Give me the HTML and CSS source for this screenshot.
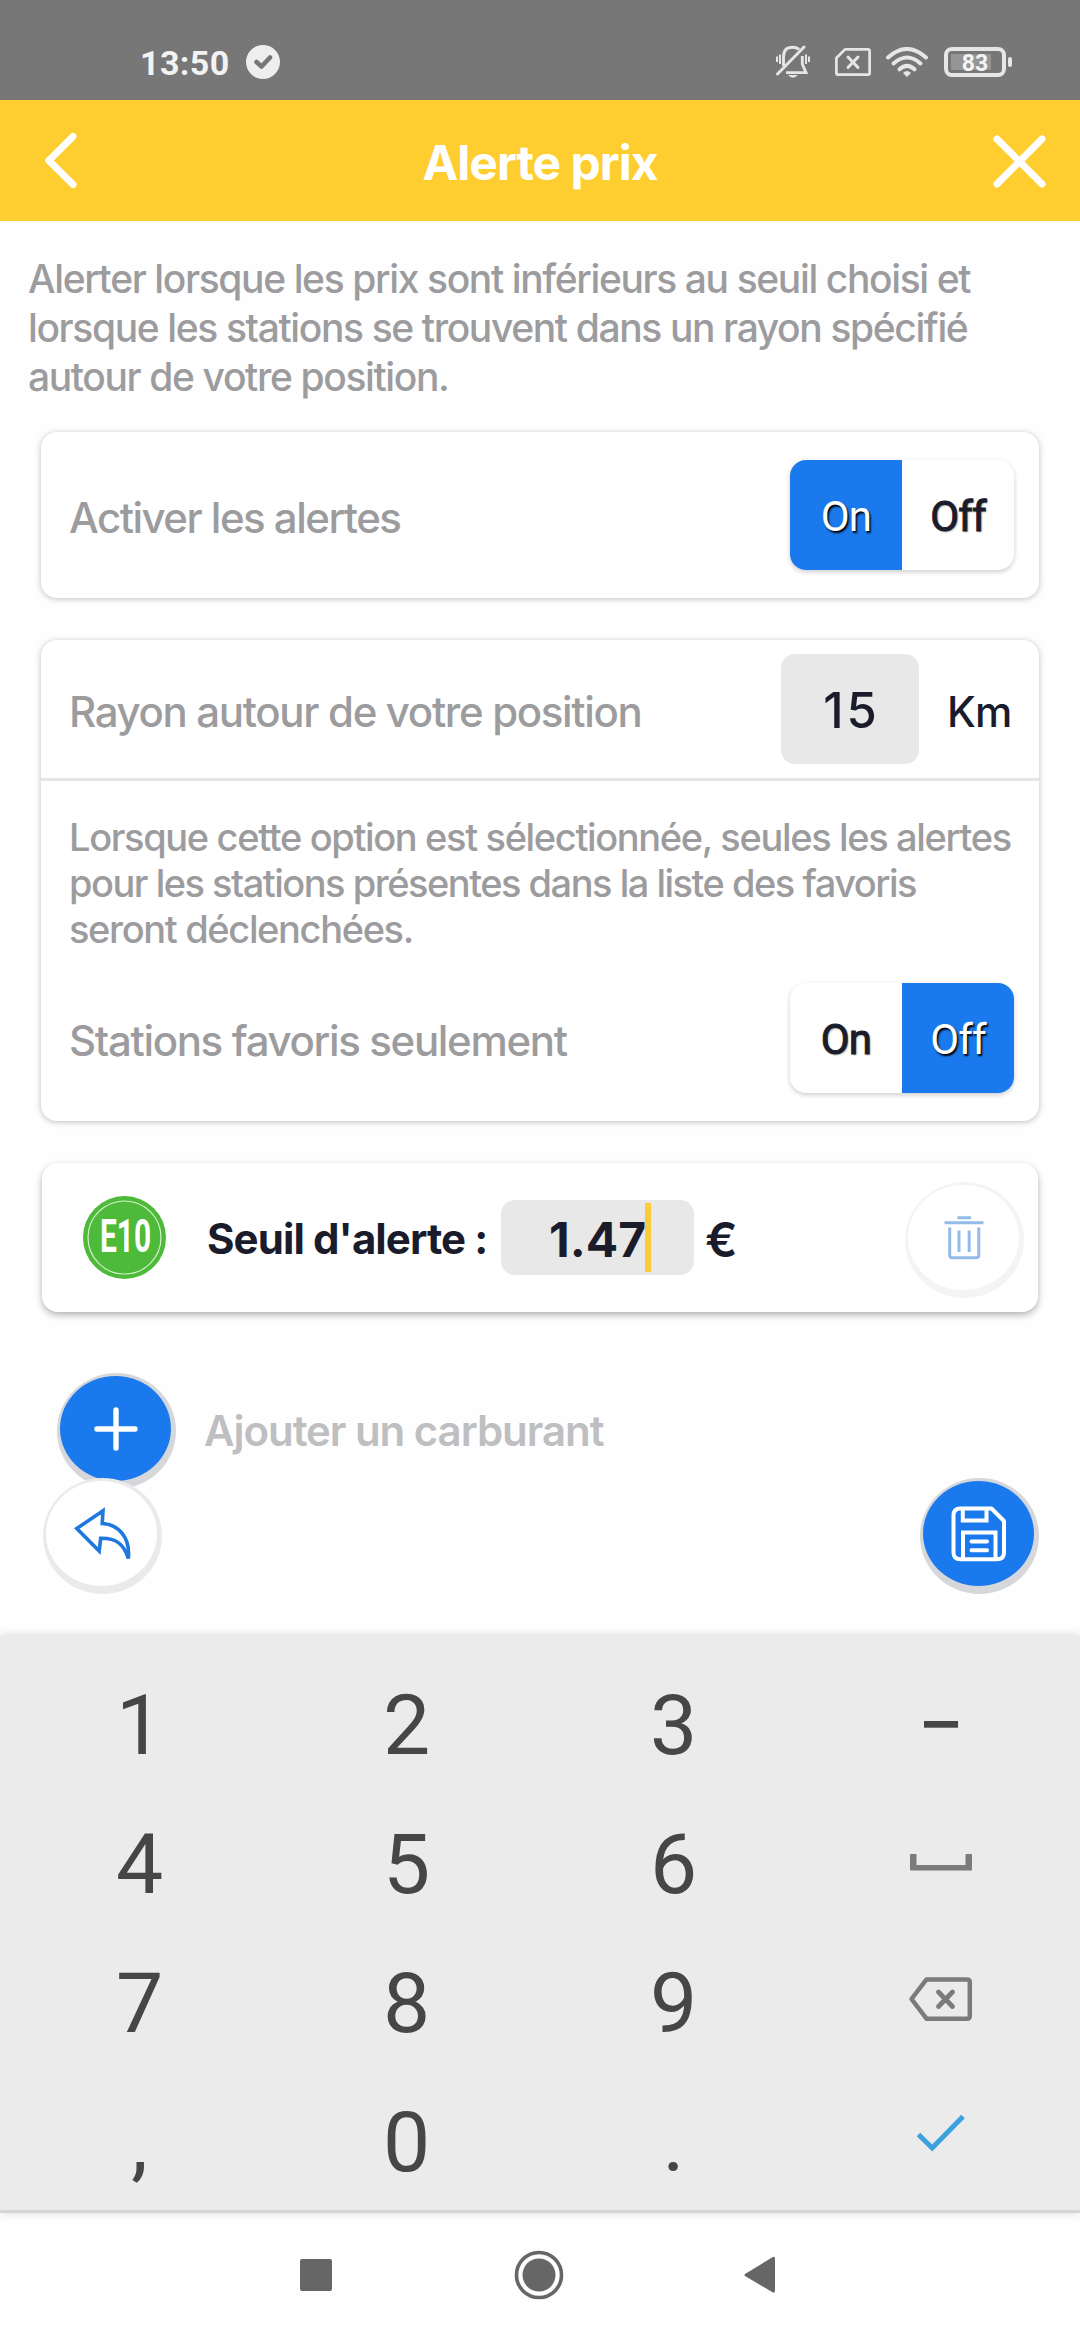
FILE: index.html
```
<!DOCTYPE html>
<html lang="fr">
  <head>
    <meta charset="UTF-8" />
    <meta name="viewport" content="width=device-width, initial-scale=1.0" />
    <title>Alerte prix</title>
    <link rel="stylesheet" href="styles.css">
  </head>
  <body>
    <div class="status-bar">
      <span class="clock">13:50</span>
      <svg class="icon-done" width="34" height="34" viewBox="0 0 34 34">
        <circle cx="17" cy="17" r="17" fill="#eee" />
        <path d="M10.5 17 L15.5 21.5 L24 12.5" fill="none" stroke="#777" stroke-width="4.6" stroke-linecap="round" stroke-linejoin="round" />
      </svg>
      <div class="status-icons">
        <svg class="icon-bell" width="34" height="34" viewBox="776 45 34 34" fill="none" stroke="#e6e6e6" stroke-width="2.9">
          <path d="M783.5 66 V57 C783.5 49 788 47.3 792.5 47.3 C795 47.3 797.5 48 799 49.5" />
          <path d="M802.3 56 V64 L806 72.6 H786" />
          <path d="M777.5 74 L804 47" stroke-linecap="round" />
          <path d="M777 56.5 V62 M780 54.5 V64 M806 54.5 V64 M809 56.5 V62" stroke-width="2" />
          <path d="M788 75 H798 Q793 80.5 788 75 Z" fill="#e6e6e6" stroke="none" />
        </svg>
        <svg class="icon-sim" width="36" height="28" viewBox="835 48 36 28" fill="none" stroke="#e6e6e6" stroke-width="2.7" stroke-linejoin="round" stroke-linecap="round">
          <path d="M845 49.4 H868 Q869.6 49.4 869.6 51 V73 Q869.6 74.6 868 74.6 H838 Q836.4 74.6 836.4 73 V58 Z" />
          <path d="M848 57 L858 67.5 M858 57 L848 67.5" stroke-width="3" />
        </svg>
        <svg class="icon-wifi" width="42" height="30" viewBox="886 47 42 30" fill="none" stroke="#e6e6e6" stroke-width="4" stroke-linecap="round">
          <path d="M888 57.5 Q907 40.5 926 57.5" />
          <path d="M893.5 63.5 Q907 51.5 920.5 63.5" />
          <path d="M899.5 69.3 Q907 62.5 914.5 69.3" />
          <path d="M903 73 Q907 69 911 73 L907 77 Z" fill="#e6e6e6" stroke="none" />
        </svg>
        <svg width="68" height="30" viewBox="944 47 68 30">
          <rect x="951" y="54" width="40" height="16" fill="#959595" />
          <rect x="946" y="49" width="58" height="26" rx="6" fill="none" stroke="#e6e6e6" stroke-width="4" />
          <rect x="1008" y="57" width="4" height="10" rx="2" fill="#e6e6e6" />
          <text class="battery-level" x="975" y="71" text-anchor="middle">83</text>
        </svg>
      </div>
    </div>

    <header class="header">
      <svg class="back" width="40" height="62" viewBox="42 130 40 62">
        <path d="M73 136.5 L48.8 160.5 L73 184.5" />
      </svg>
      <h1>Alerte prix</h1>
      <svg class="close" width="56" height="56" viewBox="992 132 56 56">
        <path d="M997 138 L1042 183 M1042 138 L997 183" />
      </svg>
    </header>

    <main class="content">
      <p class="intro">
        Alerter lorsque les prix sont inférieurs au seuil choisi et<br />
        lorsque les stations se trouvent dans un rayon spécifié<br />
        autour de votre position.
      </p>

      <section class="card card-enable">
        <span class="label label-enable">Activer les alertes</span>
        <div class="toggle">
          <span class="option active">On</span>
          <span class="option">Off</span>
        </div>
      </section>

      <section class="card card-radius">
        <div class="radius-row">
          <span class="label">Rayon autour de votre position</span>
          <span class="radius-field">15</span>
          <span class="unit">Km</span>
        </div>
        <p class="hint">
          Lorsque cette option est sélectionnée, seules les alertes<br />
          <span class="tight">pour les stations présentes dans la liste des favoris</span><br />
          seront déclenchées.
        </p>
        <div class="favorites-row">
          <span class="label">Stations favoris seulement</span>
          <div class="toggle">
            <span class="option">On</span>
            <span class="option active">Off</span>
          </div>
        </div>
      </section>

      <section class="card card-fuel">
        <svg class="fuel-badge" width="83" height="83" viewBox="0 0 83 83">
          <circle cx="41.5" cy="41.5" r="41.5" fill="#4dba39" />
          <circle cx="41.5" cy="41.5" r="36.5" fill="none" stroke="#d3f0cb" stroke-width="1.2" />
          <text class="fuel-name" transform="translate(42.5 56) scale(0.65 1)" text-anchor="middle">E10</text>
        </svg>
        <span class="threshold-label">Seuil d'alerte :</span>
        <span class="threshold-field">1.47<span class="caret"></span></span>
        <span class="currency">€</span>
        <div class="round-btn trash">
          <div class="face">
            <svg width="40" height="44" viewBox="943.5 1215.5 40 44" fill="none" stroke="#93bbe8" stroke-width="3">
              <path d="M944 1222.3 H983 M957 1217.3 H970.5" />
              <path d="M949.2 1227 V1254.5 Q949.2 1257.3 952 1257.3 H975.5 Q978.3 1257.3 978.3 1254.5 V1227" />
              <path d="M958.5 1230 V1251.5 M968.7 1230 V1251.5" />
            </svg>
          </div>
        </div>
      </section>

      <div class="add-row">
        <div class="round-btn primary">
          <div class="face">
            <svg width="44" height="44" viewBox="0 0 44 44">
              <path d="M22 3 V41 M3 22 H41" stroke="#fff" stroke-width="5.4" stroke-linecap="round" />
            </svg>
          </div>
        </div>
        <span class="add-label">Ajouter un carburant</span>
      </div>

      <div class="actions">
        <div class="round-btn">
          <div class="face">
            <svg width="62" height="58" viewBox="70 1504 62 58">
              <path d="M75.8 1527.5 L102 1509.8 L101.2 1522.5 C118 1523.5 129.5 1537 127.3 1557.5 C123 1543 115 1537 99.7 1537.3 L98.2 1550 Z" fill="none" stroke="#1f78dd" stroke-width="3.6" />
            </svg>
          </div>
        </div>
        <div class="round-btn primary">
          <div class="face">
            <svg width="56" height="56" viewBox="950.5 1505.5 56 56" fill="none" stroke="#fff" stroke-width="4" stroke-linejoin="round">
              <path d="M960 1508 H991 L1003.5 1520.5 V1552 Q1003.5 1558.8 996.5 1558.8 H960 Q953 1558.8 953 1552 V1515 Q953 1508 960 1508 Z" />
              <path d="M962.3 1508 V1520 H986 V1508" stroke-linejoin="miter" />
              <path d="M962.5 1558 V1532 H995 V1558" stroke-linejoin="miter" />
              <path d="M971 1541 H986.5 M971 1549.8 H986.5" stroke-linecap="round" />
            </svg>
          </div>
        </div>
      </div>
    </main>

    <div class="keyboard">
      <span>1</span><span>2</span><span>3</span>
      <svg width="80" height="80" viewBox="0 0 80 80">
        <rect x="23" y="35" width="34" height="6.7" fill="#464646" />
      </svg>
      <span>4</span><span>5</span><span>6</span>
      <svg width="80" height="80" viewBox="0 0 80 80">
        <path d="M9 30 Q9 29 10 29 H14.5 Q15.5 29 15.5 30 V40 H64.5 V30 Q64.5 29 65.5 29 H70 Q71 29 71 30 V44.5 Q71 45.5 70 45.5 H10 Q9 45.5 9 44.5 Z" fill="#7b7b7b" />
      </svg>
      <span>7</span><span>8</span><span>9</span>
      <svg width="80" height="80" viewBox="0 0 80 80" fill="none" stroke="#7b7b7b">
        <path d="M10.5 35 L25.5 15.4 H66 Q68.8 15.4 68.8 18 V52 Q68.8 54.7 66 54.7 H25.5 Z" stroke-width="4.5" stroke-linejoin="round" />
        <path d="M37.5 28 L51.5 42.5 M51.5 28 L37.5 42.5" stroke-width="4.8" stroke-linecap="round" />
      </svg>
      <span>,</span><span>0</span><span>.</span>
      <svg width="80" height="80" viewBox="0 0 80 80">
        <path d="M17.5 31.5 L31.2 45 L62 13.5" fill="none" stroke="#3ba2df" stroke-width="5" />
      </svg>
    </div>

    <nav class="nav-bar">
      <svg width="32" height="32" viewBox="0 0 32 32"><rect width="32" height="32" rx="2" fill="#666" /></svg>
      <svg class="home" width="50" height="50" viewBox="0 0 50 50">
        <circle cx="25" cy="25" r="22.5" fill="none" stroke="#666" stroke-width="3.6" />
        <circle cx="25" cy="25" r="16.5" fill="#666" />
      </svg>
      <svg width="32" height="38" viewBox="0 0 32 38"><path d="M1 18 L28.5 1.2 Q31 0 31 3 V34.5 Q31 37.5 28.5 36.3 L1 20 Q0 19 1 18 Z" fill="#666" /></svg>
    </nav>
  </body>
</html>
```
FILE: styles.css
```
:root {
  --primary: #1a7aed;
  --header: #fecd2f;
  --text: #1a1c2b;
  --muted: #9c9c9e;
  --field: #e8e8e8;
}

* {
  box-sizing: border-box;
}

body {
  margin: 0;
  width: 1080px;
  height: 2340px;
  display: flex;
  flex-direction: column;
  overflow: hidden;
  background: #fefefe;
  color: var(--text);
  font-family: Inter, "Liberation Sans", sans-serif;
}

svg {
  display: block;
  flex: none;
}

h1,
p {
  margin: 0;
}

/* Status bar */
.status-bar {
  height: 100px;
  flex: none;
  background: #777;
  display: flex;
  align-items: center;
  padding: 24px 68px 0 140px;
}

.clock {
  width: 106px;
  font-family: Roboto, sans-serif;
  font-size: 34px;
  font-weight: 700;
  letter-spacing: 0.4px;
  line-height: 40px;
  padding-top: 2px;
  color: #f2f2f2;
}

.status-icons {
  display: flex;
  align-items: center;
  margin-left: auto;
}

.icon-bell {
  margin-right: 25px;
}

.icon-sim {
  margin-right: 15px;
}

.icon-wifi {
  margin-right: 16px;
}

.battery-level {
  font-family: Roboto, sans-serif;
  font-size: 23px;
  font-weight: 700;
  fill: #f4f4f4;
}

/* Header */
.header {
  height: 121px;
  flex: none;
  background: var(--header);
  display: grid;
  grid-template-columns: 120px 1fr 120px;
  align-items: center;
}

.header h1 {
  padding-top: 4px;
  text-align: center;
  font-size: 48px;
  font-weight: 700;
  line-height: 58px;
  letter-spacing: -1px;
  color: #fff;
}

.header path {
  fill: none;
  stroke: #fff;
  stroke-width: 7px;
  stroke-linecap: round;
  stroke-linejoin: round;
}

.back {
  margin-left: 42px;
}

.close {
  margin-left: 32px;
}

/* Content */
.content {
  flex: 1;
}

.intro {
  margin: 33px 0 31px 28px;
  font-size: 39px;
  font-weight: 500;
  line-height: 49px;
  letter-spacing: -1.38px;
  color: var(--muted);
}

.card {
  margin: 0 41px;
  background: #fff;
  border-radius: 16px;
  box-shadow: 0 1px 6px rgba(0, 0, 0, 0.25);
}

.label {
  flex: 1;
  padding-top: 5px;
  font-size: 42px;
  font-weight: 500;
  line-height: 50px;
  letter-spacing: -1.34px;
  color: var(--muted);
}

.card-enable {
  height: 166px;
  display: flex;
  align-items: center;
  padding: 0 25px 0 28px;
}

.label-enable {
  letter-spacing: -1.52px;
}

.toggle {
  width: 224px;
  height: 110px;
  display: flex;
  border-radius: 16px;
  overflow: hidden;
  box-shadow: 0 2px 5px rgba(0, 0, 0, 0.2);
}

.option {
  flex: 1;
  padding-top: 4px;
  font-family: Roboto, sans-serif;
  font-size: 42px;
  letter-spacing: -0.8px;
  line-height: 105px;
  text-align: center;
  color: var(--text);
  -webkit-text-stroke: 1px var(--text);
  text-shadow: 1px 1px 2px rgba(0, 0, 0, 0.4);
}

.option.active {
  background: var(--primary);
  color: #fff;
  -webkit-text-stroke: 0;
  text-shadow: 1.5px 1.5px 2px #000;
}

.card-radius {
  margin-top: 42px;
  height: 481px;
}

.radius-row {
  height: 141px;
  display: flex;
  align-items: center;
  padding: 0 25px 0 28px;
  border-bottom: 3px solid #e6e6e6;
}

.radius-field {
  width: 138px;
  height: 110px;
  padding-top: 3px;
  border-radius: 14px;
  background: var(--field);
  font-size: 49px;
  line-height: 107px;
  letter-spacing: 3px;
  text-indent: 3px;
  text-align: center;
  font-weight: 500;
}

.unit {
  width: 95px;
  padding: 5px 0 0 28px;
  font-size: 42px;
  font-weight: 500;
  line-height: 50px;
  letter-spacing: -0.8px;
}

.hint {
  padding: 33px 0 31px 28px;
  font-size: 38px;
  font-weight: 500;
  line-height: 46px;
  letter-spacing: -1.35px;
  color: var(--muted);
}

.tight {
  letter-spacing: -1.5px;
}

.favorites-row {
  display: flex;
  align-items: center;
  padding: 0 25px 0 28px;
}

/* Fuel threshold */
.card-fuel {
  margin: 42px 42px 0;
  height: 149px;
  display: flex;
  align-items: center;
  box-shadow: 0 3px 7px rgba(0, 0, 0, 0.3);
}

.fuel-badge {
  margin-left: 41px;
}

.fuel-name {
  font-family: Roboto, sans-serif;
  font-size: 46px;
  font-weight: 700;
  fill: #fff;
}

.threshold-label {
  width: 294px;
  margin-left: 41px;
  padding-top: 3px;
  font-size: 42px;
  font-weight: 700;
  line-height: 50px;
  letter-spacing: -0.9px;
  white-space: nowrap;
}

.threshold-field {
  position: relative;
  width: 193px;
  height: 75px;
  padding-top: 4px;
  border-radius: 14px;
  background: var(--field);
  font-size: 48px;
  font-weight: 700;
  line-height: 71px;
  text-align: center;
}

.caret {
  position: absolute;
  left: 144px;
  top: 3px;
  width: 6px;
  height: 69px;
  background: #fbcb3c;
}

.currency {
  margin-left: 11px;
  padding-top: 4px;
  font-size: 48px;
  font-weight: 600;
  line-height: 58px;
}

/* Round buttons */
.round-btn {
  width: 119px;
  height: 116px;
  flex: none;
  padding: 3px 5px 8px 3px;
  border-radius: 50%;
  background: #eaeaea;
}

.face {
  width: 111px;
  height: 105px;
  display: flex;
  align-items: center;
  justify-content: center;
  border-radius: 50%;
  background: #fff;
}

.round-btn.primary {
  background: #d6d7da;
}

.primary .face {
  background: var(--primary);
}

.trash {
  margin: 5px 14px 0 auto;
  background: #f4f4f4;
}

.add-row {
  display: flex;
  align-items: center;
  margin: 61px 0 0 57px;
}

.add-label {
  margin-left: 28px;
  font-size: 42px;
  font-weight: 600;
  letter-spacing: -1.05px;
  line-height: 50px;
  color: #bfbfc1;
}

.actions {
  position: relative;
  display: flex;
  justify-content: space-between;
  margin: -11px 41px 0 43px;
}

/* Keyboard */
.keyboard {
  position: relative;
  height: 578px;
  flex: none;
  display: grid;
  grid-template-columns: repeat(4, 267px);
  grid-auto-rows: 139.2px;
  justify-content: center;
  justify-items: center;
  align-items: center;
  padding-top: 21px;
  background: #ebebeb;
  border-bottom: 3px solid #d6d6d6;
  box-shadow: 0 0 8px rgba(0, 0, 0, 0.15);
  font-family: Roboto, sans-serif;
  font-size: 84px;
  line-height: 100px;
  color: #464646;
}

/* System navigation */
.nav-bar {
  height: 127px;
  flex: none;
  display: flex;
  align-items: center;
  padding: 0 0 3px 300px;
}

.home {
  margin: 0 180px 0 182px;
}
```
